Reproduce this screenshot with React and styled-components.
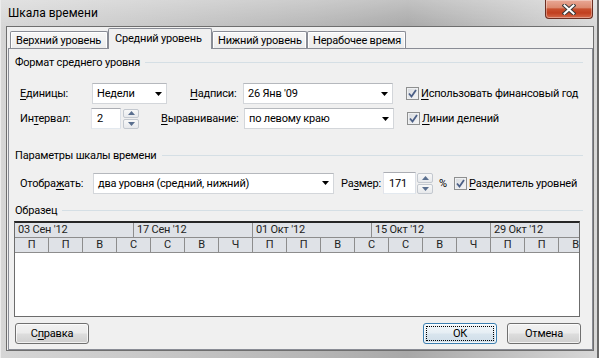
import React from "react";
import styled, { createGlobalStyle } from "styled-components";

const FONT = `Roboto, "Noto Sans", "Liberation Sans", sans-serif`;

const GlobalStyle = createGlobalStyle`
	html, body {
		margin: 0;
		padding: 0;
		width: 599px;
		height: 358px;
		overflow: hidden;
	}
	body {
		font-family: ${FONT};
		font-size: 11px;
		letter-spacing: -0.2px;
		color: #000;
	}
	* {
		box-sizing: border-box;
	}
	u {
		text-decoration-thickness: 1px;
		text-underline-offset: 2px;
	}
`;

const Window = styled.div`
	width: 599px;
	height: 358px;
	display: flex;
	flex-direction: column;
	padding: 0 5px 7px 6px;
	background: linear-gradient(180deg, rgba(255, 255, 255, 0.3), rgba(255, 255, 255, 0) 28px),
		linear-gradient(90deg, #d6d6d6 0%, #c8c8c8 25%, #b6b6b6 52%, #a8a8a8 68%, #c0c0c0 84%, #d8d8d8 100%);
	box-shadow: inset 1px 0 0 #ececec, inset -4px 0 0 -2px #6a6a6a;
`;

const TitleBar = styled.div`
	height: 26px;
	display: flex;
	justify-content: space-between;
	align-items: flex-start;
	flex-shrink: 0;
`;

const Title = styled.div`
	padding-left: 2px;
	line-height: 26px;
	font-size: 12px;
	letter-spacing: 0;
	color: #000;
`;

const CloseButton = styled.div`
	width: 48px;
	height: 19px;
	margin-right: 1px;
	border: 1px solid #6b2e22;
	border-top: none;
	border-radius: 0 0 4px 4px;
	background: linear-gradient(180deg, #e9a896 0%, #dc8a70 42%, #c8502f 50%, #c13f1f 72%, #d56a4b 100%);
	box-shadow: inset 0 0 0 1px rgba(255, 255, 255, 0.35);
	display: flex;
	align-items: center;
	justify-content: center;
`;

const Client = styled.div`
	flex: 1;
	display: flex;
	flex-direction: column;
	border: 1px solid #6e6e6e;
	background: #f0f0f0;
	padding-left: 1px;
`;

const TabStrip = styled.div`
	height: 21px;
	display: flex;
	align-items: flex-end;
	padding-left: 2px;
	flex-shrink: 0;
`;

const Tab = styled.div`
	width: ${(p) => p.$w}px;
	height: ${(p) => (p.$active ? 21 : 17)}px;
	margin-bottom: ${(p) => (p.$active ? -1 : 0)}px;
	position: relative;
	z-index: ${(p) => (p.$active ? 1 : 0)};
	border: 1px solid #898c95;
	border-bottom: none;
	border-radius: 2px 2px 0 0;
	background: ${(p) => (p.$active ? "#f0f0f0" : "linear-gradient(180deg, #f7f7f7, #ececec)")};
	box-shadow: ${(p) => (p.$active ? "none" : "inset 1px 1px 0 #fff, inset -1px 0 0 #fff")};
	padding-left: ${(p) => (p.$active ? 6 : 5)}px;
	line-height: ${(p) => (p.$active ? 19 : 17)}px;
	white-space: nowrap;
	overflow: hidden;
`;

const Panel = styled.div`
	flex: 1;
	display: flex;
	flex-direction: column;
	border: 1px solid #898c95;
	background: #f0f0f0;
	padding: 6px 0 5px 0;
`;

const SectionHeader = styled.div`
	display: flex;
	align-items: center;
	gap: 5px;
	height: 15px;
	margin-top: ${(p) => p.$mt || 0}px;
	margin-right: 9px;
	padding-left: 6px;
	white-space: nowrap;
	&::after {
		content: "";
		flex: 1;
		height: 1px;
		background: #d5dfe5;
	}
`;

const Row = styled.div`
	display: flex;
	align-items: center;
	height: ${(p) => p.$h}px;
	margin-top: ${(p) => p.$mt}px;
	padding-left: 11px;
	white-space: nowrap;
`;

const Label = styled.div`
	width: ${(p) => p.$w}px;
	margin-left: ${(p) => p.$ml || 0}px;
	flex-shrink: 0;
`;

const Combo = styled.div`
	width: ${(p) => p.$w}px;
	height: 21px;
	flex-shrink: 0;
	display: flex;
	align-items: center;
	justify-content: space-between;
	padding: 0 4px 0 4px;
	background: #fff;
	border: 1px solid #d3d6da;
	border-top-color: #b5b8bd;
`;

const Field = styled.div`
	width: ${(p) => p.$w}px;
	height: ${(p) => p.$h}px;
	flex-shrink: 0;
	display: flex;
	align-items: center;
	padding-left: 5px;
	background: #fff;
	border: 1px solid #abadb3;
	border-color: #abadb3 #dbdfe6 #e3e9ef #e2e3ea;
`;

const SpinBox = styled.div`
	width: 16px;
	height: ${(p) => p.$h}px;
	margin-left: ${(p) => p.$gap}px;
	flex-shrink: 0;
	display: flex;
	flex-direction: column;
	gap: 1px;
`;

const SpinButton = styled.div`
	flex: 1;
	display: flex;
	align-items: center;
	justify-content: center;
	border: 1px solid #c3c8cf;
	border-radius: 2px;
	background: linear-gradient(180deg, #f8f8f8, #e7e9ec);
`;

const Percent = styled.div`
	margin-left: 6px;
	width: 14px;
`;

const CheckItem = styled.div`
	display: flex;
	align-items: center;
	gap: 2px;
	margin-left: ${(p) => p.$ml}px;
`;

const Box = styled.div`
	width: 13px;
	height: 13px;
	flex-shrink: 0;
	border: 1px solid #8e8f8f;
	background: linear-gradient(135deg, #d6d9dd, #f7f7f7);
	box-shadow: inset 0 0 0 1px #eef0f2;
	display: flex;
	align-items: center;
	justify-content: center;
`;

const Sample = styled.div`
	width: 566px;
	height: 96px;
	margin: 3px 0 0 5px;
	flex-shrink: 0;
	background: #fff;
	border: 1px solid #6c6c6c;
	border-top: 2px solid #262626;
	overflow: hidden;
`;

const ScaleRow = styled.div`
	display: flex;
	height: 15px;
	background: #dfe2e7;
	border-bottom: 1px solid #8d8d8d;
	color: #222;
	font-size: 11px;
	line-height: 14px;
`;

const ScaleCell = styled.div`
	flex: 0 0 ${(p) => p.$w}px;
	border-right: 1px solid #8d8d8d;
	padding-left: ${(p) => (p.$center ? 0 : 3)}px;
	text-align: ${(p) => (p.$center ? "center" : "left")};
	white-space: nowrap;
	overflow: hidden;
`;

const ButtonRow = styled.div`
	display: flex;
	margin-top: 6px;
	padding: 0 11px 0 6px;
	gap: 10px;
`;

const Spacer = styled.div`
	flex: 1;
`;

const Button = styled.div`
	width: 74px;
	height: 21px;
	position: relative;
	display: flex;
	align-items: center;
	justify-content: center;
	border: 1px solid ${(p) => (p.$primary ? "#3c7fb1" : "#707070")};
	border-radius: 3px;
	background: ${(p) =>
		p.$primary
			? "linear-gradient(180deg, #f2f7fa 0%, #e6eef4 48%, #d9e5ee 52%, #d0dee9 100%)"
			: "linear-gradient(180deg, #f2f2f2 0%, #ebebeb 48%, #dddddd 52%, #cfcfcf 100%)"};
	box-shadow: inset 0 0 0 1px rgba(255, 255, 255, 0.7);
	&::after {
		content: "";
		display: ${(p) => (p.$primary ? "block" : "none")};
		position: absolute;
		inset: 2px;
		border: 1px dotted #000;
	}
`;

const Arrow = () => (
	<svg width="7" height="4" viewBox="0 0 7 4">
		<polygon points="0,0 7,0 3.5,4" fill="#000" />
	</svg>
);

const SpinArrow = ({ up }) => (
	<svg width="7" height="4" viewBox="0 0 7 4">
		<polygon points={up ? "0,4 7,4 3.5,0" : "0,0 7,0 3.5,4"} fill="#5a6f8f" />
	</svg>
);

const Spinner = ({ value, w, h, gap }) => (
	<>
		<Field $w={w} $h={h}>
			{value}
		</Field>
		<SpinBox $h={h - 1} $gap={gap}>
			<SpinButton>
				<SpinArrow up />
			</SpinButton>
			<SpinButton>
				<SpinArrow />
			</SpinButton>
		</SpinBox>
	</>
);

const Check = ({ ml, children }) => (
	<CheckItem $ml={ml}>
		<Box>
			<svg width="9" height="9" viewBox="0 0 9 9">
				<polyline points="1,4.5 3.5,7.5 8,1" fill="none" stroke="#4b5f86" strokeWidth="1.8" />
			</svg>
		</Box>
		<span>{children}</span>
	</CheckItem>
);

const tabs = [
	{ name: "Верхний уровень", w: 98 },
	{ name: "Средний уровень", w: 104, active: true },
	{ name: "Нижний уровень", w: 95 },
	{ name: "Нерабочее время", w: 99 },
];

const majors = ["03 Сен '12", "17 Сен '12", "01 Окт '12", "15 Окт '12", "29 Окт '12"];
const minors = "ППВССВЧППВССВЧППВ".split("");

export default function App() {
	return (
		<>
			<GlobalStyle />
			<Window>
				<TitleBar>
					<Title>Шкала времени</Title>
					<CloseButton>
						<svg width="14" height="11" viewBox="0 0 14 11">
							<path d="M2.5 1.5 L11.5 9.5 M11.5 1.5 L2.5 9.5" stroke="#3a3a3a" strokeWidth="4" strokeLinecap="square" />
							<path d="M2.5 1.5 L11.5 9.5 M11.5 1.5 L2.5 9.5" stroke="#fff" strokeWidth="2" strokeLinecap="square" />
						</svg>
					</CloseButton>
				</TitleBar>
				<Client>
					<TabStrip>
						{tabs.map((t) => (
							<Tab key={t.name} $w={t.w} $active={t.active}>
								{t.name}
							</Tab>
						))}
					</TabStrip>
					<Panel>
						<SectionHeader>Формат среднего уровня</SectionHeader>
						<Row $h={21} $mt={13}>
							<Label $w={72}>
								<u>Е</u>диницы:
							</Label>
							<Combo $w={75}>
								<span>Недели</span>
								<Arrow />
							</Combo>
							<Label $w={53} $ml={23}>
								<u>Н</u>адписи:
							</Label>
							<Combo $w={150}>
								<span>26 Янв '09</span>
								<Arrow />
							</Combo>
							<Check ml={13}>
								<u>И</u>спользовать финансовый год
							</Check>
						</Row>
						<Row $h={21} $mt={4}>
							<Label $w={71}>
								Ин<u>т</u>ервал:
							</Label>
							<Spinner value="2" w={30} h={21} gap={2} />
							<Label $w={83} $ml={22}>
								<u>В</u>ыравнивание:
							</Label>
							<Combo $w={150}>
								<span>по левому краю</span>
								<Arrow />
							</Combo>
							<Check ml={13}>
								<u>Л</u>инии делений
							</Check>
						</Row>
						<SectionHeader $mt={19}>Параметры шкалы времени</SectionHeader>
						<Row $h={22} $mt={9}>
							<Label $w={73}>
								Отобра<u>ж</u>ать:
							</Label>
							<Combo $w={241}>
								<span>два уровня (средний, нижний)</span>
								<Arrow />
							</Combo>
							<Label $w={42} $ml={7}>
								Ра<u>з</u>мер:
							</Label>
							<Spinner value="171" w={33} h={22} gap={1} />
							<Percent>%</Percent>
							<Check ml={1}>
								<u>Р</u>азделитель уровней
							</Check>
						</Row>
						<SectionHeader $mt={9}>Образец</SectionHeader>
						<Sample>
							<ScaleRow>
								{majors.map((m) => (
									<ScaleCell key={m} $w={119}>
										{m}
									</ScaleCell>
								))}
							</ScaleRow>
							<ScaleRow>
								{minors.map((d, i) => (
									<ScaleCell key={i} $w={34} $center>
										{d}
									</ScaleCell>
								))}
							</ScaleRow>
						</Sample>
						<ButtonRow>
							<Button>
								С<u>п</u>равка
							</Button>
							<Spacer />
							<Button $primary>ОК</Button>
							<Button>Отмена</Button>
						</ButtonRow>
					</Panel>
				</Client>
			</Window>
		</>
	);
}
